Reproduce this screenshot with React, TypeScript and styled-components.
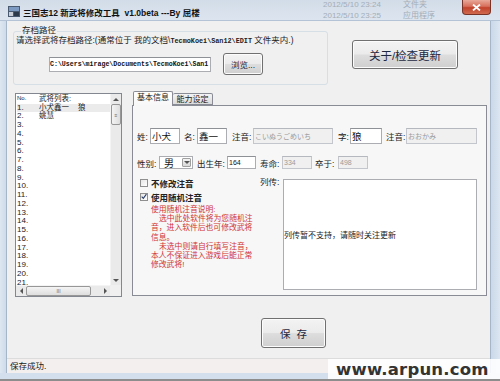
import React from 'react';
import styled, { createGlobalStyle } from 'styled-components';

const GlobalStyle = createGlobalStyle`
  html, body { margin: 0; padding: 0; }
  body {
    width: 500px;
    height: 381px;
    overflow: hidden;
    background: #8a8a8a;
    font-family: 'Liberation Sans', 'Noto Sans CJK SC', sans-serif;
    color: #1a1a1a;
  }
  * { box-sizing: border-box; }
`;

const Window = styled.div`
  position: relative;
  width: 500px;
  height: 381px;
  display: flex;
  flex-direction: column;
  background: #d3dfec;
  border-bottom: 2px solid #8d8d8d;
`;

const TitleBar = styled.div`
  height: 21px;
  display: flex;
  align-items: flex-start;
  background: linear-gradient(#d2dce8, #dce5ef);
  border-bottom: 1px solid #b4c3d5;
`;

const AppIcon = styled.svg`
  margin: 6px 0 0 8px;
  flex: none;
`;

const TitleText = styled.div`
  margin: 7px 0 0 3px;
  font-size: 8.5px;
  line-height: 12px;
  font-weight: bold;
  color: #111;
  white-space: pre;
`;

const Ghost = styled.div`
  margin-left: auto;
  width: 139px;
  display: grid;
  grid-template-columns: 80px 1fr;
  font-size: 8px;
  line-height: 11px;
  color: #a4adb7;
  margin-top: -1px;
`;

const CloseButton = styled.div`
  width: 29px;
  height: 15px;
  margin-right: 9px;
  border: 1px solid #7a3327;
  border-top: none;
  border-radius: 0 0 4px 4px;
  background: linear-gradient(#e9a899 0%, #d7705c 45%, #c2422b 55%, #cf6a4f 100%);
  display: flex;
  align-items: center;
  justify-content: center;
`;

const Middle = styled.div`
  flex: 1;
  display: flex;
`;

const LeftFrame = styled.div`
  width: 7px;
  background: linear-gradient(90deg, #dde7f2, #cfdbea);
  border-right: 1px solid #a6b6c9;
`;

const RightFrame = styled.div`
  width: 10px;
  background: linear-gradient(90deg, #cad8e8, #dce6f1);
  border-left: 1px solid #a6b6c9;
`;

const BottomFrame = styled.div`
  height: 6px;
  background: #d3dfec;
`;

const Client = styled.div`
  width: 483px;
  display: flex;
  flex-direction: column;
  background: #f0f0f0;
`;

const TopRow = styled.div`
  height: 69px;
  display: flex;
  align-items: flex-start;
`;

const GroupBox = styled.div`
  margin: 10px 0 0 6px;
  width: 315px;
  height: 54px;
  border: 1px solid #d5dfe5;
  border-radius: 3px;
  padding-left: 2px;
`;

const Legend = styled.div`
  width: fit-content;
  margin: -7px 0 0 5px;
  padding: 0 1px;
  background: #f0f0f0;
  font-size: 8.5px;
  line-height: 10px;
`;

const Hint = styled.div`
  font-size: 8.5px;
  line-height: 10px;
  white-space: nowrap;
  color: #222;
`;

const Mono = styled.span`
  font-family: 'Liberation Mono', monospace;
  font-size: 6.8px;
  font-weight: bold;
`;

const PathRow = styled.div`
  display: flex;
  align-items: center;
  margin: 7px 0 0 33px;
`;

const PathBox = styled.div`
  width: 162px;
  height: 15px;
  border: 1px solid #abadb3;
  border-top-color: #8e9196;
  background: #fff;
  overflow: hidden;
  white-space: nowrap;
  font-family: 'Liberation Mono', monospace;
  font-size: 6.6px;
  font-weight: bold;
  line-height: 13px;
  color: #111;
`;

const Button = styled.div<{ w: number; h: number; fs: number }>`
  width: ${(p) => p.w}px;
  height: ${(p) => p.h}px;
  border: 1px solid #707070;
  border-radius: 3px;
  background: linear-gradient(#f3f3f3 0%, #ebebeb 48%, #dddddd 52%, #cfcfcf 100%);
  box-shadow: inset 0 0 0 1px #fcfcfc;
  display: flex;
  align-items: center;
  justify-content: center;
  font-size: ${(p) => p.fs}px;
  color: #1d2740;
  white-space: pre;
  flex: none;
`;

const BrowseButton = styled(Button)`
  margin-left: 12px;
`;

const AboutButton = styled(Button)`
  margin: 19px 0 0 24px;
`;

const MainRow = styled.div`
  display: flex;
  align-items: flex-start;
`;

const ListBox = styled.div`
  margin: 3px 0 0 8px;
  width: 107px;
  height: 204px;
  border: 1px solid #828790;
  background: #fff;
  display: grid;
  grid-template-columns: 1fr 11px;
  grid-template-rows: 1fr 11px;
`;

const ListContent = styled.div`
  overflow: hidden;
  padding-left: 1px;
`;

const ListRow = styled.div<{ selected?: boolean; header?: boolean }>`
  display: flex;
  height: ${(p) => (p.header ? 9.5 : 8.75)}px;
  line-height: ${(p) => (p.header ? 9.5 : 8.75)}px;
  font-size: 7.5px;
  background: ${(p) => (p.selected ? '#ebebeb' : 'transparent')};
  white-space: nowrap;
`;

const NumCell = styled.div<{ header?: boolean }>`
  width: 22px;
  font-size: ${(p) => (p.header ? 6 : 8)}px;
`;

const NameCell = styled.div`
  font-size: 7.5px;
`;

const Surname = styled.span`
  margin-left: 9px;
`;

const VScroll = styled.div`
  display: flex;
  flex-direction: column;
  background: #eaeaea;
  border-left: 1px solid #f4f4f4;
`;

const HScroll = styled.div`
  display: flex;
  background: #eaeaea;
  border-top: 1px solid #f4f4f4;
`;

const Corner = styled.div`
  background: #f0f0f0;
`;

const Arrow = styled.div<{ size: number }>`
  flex: none;
  width: ${(p) => p.size}px;
  height: ${(p) => p.size}px;
  display: flex;
  align-items: center;
  justify-content: center;
`;

const Track = styled.div`
  flex: 1;
`;

const Thumb = styled.div<{ vertical?: boolean }>`
  flex: none;
  width: ${(p) => (p.vertical ? '10px' : '65px')};
  height: ${(p) => (p.vertical ? '21px' : '10px')};
  border: 1px solid #979797;
  border-radius: 2px;
  background: ${(p) =>
    p.vertical
      ? 'linear-gradient(90deg, #f4f4f4, #dedede)'
      : 'linear-gradient(#f4f4f4, #dedede)'};
  display: flex;
  align-items: center;
  justify-content: center;
  font-size: 5px;
  color: #666;
`;

const Tabs = styled.div`
  margin: 1px 0 0 10px;
  width: 355px;
  height: 205px;
  display: flex;
  flex-direction: column;
`;

const TabStrip = styled.div`
  height: 14px;
  display: flex;
  align-items: flex-end;
  padding-left: 1px;
  position: relative;
  z-index: 1;
`;

const Tab = styled.div<{ active?: boolean }>`
  width: 40px;
  height: ${(p) => (p.active ? 15 : 12)}px;
  margin-bottom: ${(p) => (p.active ? -1 : 0)}px;
  border: 1px solid #898c95;
  border-bottom: ${(p) => (p.active ? 'none' : '1px solid #898c95')};
  border-left: ${(p) => (p.active ? '1px solid #898c95' : 'none')};
  background: ${(p) =>
    p.active ? 'linear-gradient(#ffffff, #f7f7f7)' : 'linear-gradient(#f3f3f3, #dcdcdc)'};
  font-size: 8px;
  line-height: 11px;
  text-align: center;
  border-radius: 2px 2px 0 0;
`;

const TabPanel = styled.div`
  flex: 1;
  border: 1px solid #898c95;
  background: #f7f7f7;
  padding-left: 4px;
`;

const FieldRow = styled.div<{ h: number; mt: number }>`
  display: flex;
  align-items: center;
  height: ${(p) => p.h}px;
  margin-top: ${(p) => p.mt}px;
`;

const Label = styled.div<{ w: number; ml?: number }>`
  width: ${(p) => p.w}px;
  margin-left: ${(p) => p.ml ?? 0}px;
  font-size: 8.5px;
  color: #222;
  white-space: nowrap;
  flex: none;
`;

const Input = styled.div<{ w: number; disabled?: boolean; small?: boolean }>`
  width: ${(p) => p.w}px;
  height: 100%;
  border: 1px solid ${(p) => (p.disabled ? '#c3c6cc' : '#abadb3')};
  border-top-color: ${(p) => (p.disabled ? '#b5b8be' : '#8e9196')};
  background: ${(p) => (p.disabled ? '#f0f0f0' : '#fff')};
  color: ${(p) => (p.disabled ? '#9a9a9a' : '#111')};
  font-size: ${(p) => (p.small ? 7 : 9.5)}px;
  padding-left: 1px;
  display: flex;
  align-items: center;
  white-space: nowrap;
  overflow: hidden;
  flex: none;
`;

const Select = styled.div`
  width: 34px;
  height: 100%;
  border: 1px solid #abadb3;
  background: #fff;
  display: flex;
  align-items: center;
  justify-content: space-between;
  padding: 0 1px 0 4px;
  font-size: 10px;
  flex: none;
`;

const DropButton = styled.div`
  width: 9px;
  height: 9px;
  border: 1px solid #a0a0a0;
  border-radius: 1px;
  background: linear-gradient(#f4f4f4, #d8d8d8);
  display: flex;
  align-items: center;
  justify-content: center;
`;

const LowerGrid = styled.div`
  display: grid;
  grid-template-columns: 123px 23px 194px;
  margin-top: 9px;
`;

const CheckRow = styled.div<{ mt?: number }>`
  display: flex;
  align-items: center;
  height: 9px;
  margin-top: ${(p) => p.mt ?? 0}px;
  padding-left: 3px;
  gap: 3px;
  font-size: 8.5px;
  font-weight: bold;
  color: #222;
`;

const CheckBox = styled.div`
  width: 8px;
  height: 8px;
  border: 1px solid #8f8f8f;
  background: linear-gradient(135deg, #e6e6e6, #ffffff);
  display: flex;
  align-items: center;
  justify-content: center;
`;

const Note = styled.div`
  margin: 4px 0 0 14px;
  color: #d03434;
  font-size: 7.8px;
  line-height: 9.2px;
  white-space: nowrap;
`;

const NoteLine = styled.div<{ indent?: boolean }>`
  padding-left: ${(p) => (p.indent ? 8 : 0)}px;
`;

const MemoLabel = styled.div`
  font-size: 8.5px;
  line-height: 9px;
  color: #222;
`;

const Memo = styled.div`
  margin-top: 1px;
  height: 111px;
  border: 1px solid #abadb3;
  background: #fff;
  display: flex;
  align-items: center;
  font-size: 8px;
  white-space: nowrap;
`;

const SaveRow = styled.div`
  margin-top: 21px;
  padding-left: 254px;
`;

const StatusBar = styled.div`
  margin-top: auto;
  height: 15px;
  border-top: 1px solid #dcdcdc;
  background: #f2efee;
  padding-left: 3px;
  font-size: 8.5px;
  line-height: 14px;
`;

const Watermark = styled.div`
  position: absolute;
  right: 0;
  bottom: 0;
  width: 172px;
  height: 20px;
  background: rgba(255, 255, 255, 0.88);
  padding-left: 8px;
  font-family: 'DejaVu Sans', sans-serif;
  font-weight: bold;
  font-size: 16.5px;
  line-height: 21px;
  color: #333;
  letter-spacing: 0.2px;
`;

const triangle = (dir: 'up' | 'down' | 'left' | 'right') => {
  const pts = {
    up: '0,4 3,1 6,4',
    down: '0,1 3,4 6,1',
    left: '4,0 1,3 4,6',
    right: '1,0 4,3 1,6',
  }[dir];
  const vert = dir === 'up' || dir === 'down';
  return (
    <svg width={vert ? 6 : 5} height={vert ? 5 : 6} viewBox={vert ? '0 0 6 5' : '0 0 5 6'}>
      <polygon points={pts} fill="#555" />
    </svg>
  );
};

const names: Record<number, React.ReactNode> = {
  1: (
    <>
      小犬鑫一<Surname>狼</Surname>
    </>
  ),
  2: '姚慧',
};

function App() {
  const rows = Array.from({ length: 21 }, (_, i) => i + 1);
  return (
    <>
      <GlobalStyle />
      <Window>
        <TitleBar>
          <AppIcon width="12" height="11" viewBox="0 0 12 11">
            <rect x="0" y="0" width="12" height="11" fill="#4a5a70" />
            <rect x="1" y="1" width="10" height="4" fill="#7d9bc2" />
            <rect x="1" y="6" width="4" height="4" fill="#c9ced6" />
            <rect x="6" y="6" width="5" height="4" fill="#2d3a4c" />
          </AppIcon>
          <TitleText>三国志12 新武将修改工具  v1.0beta ---By 屈楼</TitleText>
          <Ghost>
            <span>2012/5/10 23:24</span>
            <span>文件夹</span>
            <span>2012/5/10 23:25</span>
            <span>应用程序</span>
          </Ghost>
          <CloseButton>
            <svg width="9" height="7" viewBox="0 0 9 7">
              <path d="M1 0.5 L8 6.5 M8 0.5 L1 6.5" stroke="#fff" strokeWidth="1.8" />
            </svg>
          </CloseButton>
        </TitleBar>
        <Middle>
          <LeftFrame />
          <Client>
            <TopRow>
              <GroupBox>
                <Legend>存档路径</Legend>
                <Hint>
                  请选择武将存档路径:(通常位于 我的文档\<Mono>TecmoKoei\San12\EDIT</Mono> 文件夹内.)
                </Hint>
                <PathRow>
                  <PathBox>C:\Users\mirage\Documents\TecmoKoei\San1</PathBox>
                  <BrowseButton w={40} h={22} fs={8.5}>
                    浏览...
                  </BrowseButton>
                </PathRow>
              </GroupBox>
              <AboutButton w={106} h={29} fs={11.5}>
                关于/检查更新
              </AboutButton>
            </TopRow>
            <MainRow>
              <ListBox>
                <ListContent>
                  <ListRow header>
                    <NumCell header>No.</NumCell>
                    <NameCell>武将列表:</NameCell>
                  </ListRow>
                  {rows.map((n) => (
                    <ListRow key={n} selected={n === 1}>
                      <NumCell>{n}.</NumCell>
                      <NameCell>{names[n]}</NameCell>
                    </ListRow>
                  ))}
                </ListContent>
                <VScroll>
                  <Arrow size={10}>{triangle('up')}</Arrow>
                  <Thumb vertical>≡</Thumb>
                  <Track />
                  <Arrow size={10}>{triangle('down')}</Arrow>
                </VScroll>
                <HScroll>
                  <Arrow size={10}>{triangle('left')}</Arrow>
                  <Thumb>III</Thumb>
                  <Track />
                  <Arrow size={10}>{triangle('right')}</Arrow>
                </HScroll>
                <Corner />
              </ListBox>
              <Tabs>
                <TabStrip>
                  <Tab active>基本信息</Tab>
                  <Tab>能力设定</Tab>
                </TabStrip>
                <TabPanel>
                  <FieldRow h={16} mt={22}>
                    <Label w={13}>姓:</Label>
                    <Input w={30}>小犬</Input>
                    <Label w={13} ml={4}>名:</Label>
                    <Input w={30}>鑫一</Input>
                    <Label w={21} ml={5}>注音:</Label>
                    <Input w={80} disabled small>
                      こいぬうごめいち
                    </Input>
                    <Label w={12} ml={5}>字:</Label>
                    <Input w={32}>狼</Input>
                    <Label w={20} ml={4}>注音:</Label>
                    <Input w={71} disabled small>
                      おおかみ
                    </Input>
                  </FieldRow>
                  <FieldRow h={13} mt={12}>
                    <Label w={22}>性别:</Label>
                    <Select>
                      男
                      <DropButton>{triangle('down')}</DropButton>
                    </Select>
                    <Label w={30} ml={4}>出生年:</Label>
                    <Input w={29} small>
                      164
                    </Input>
                    <Label w={22} ml={4}>寿命:</Label>
                    <Input w={30} disabled small>
                      334
                    </Input>
                    <Label w={23} ml={3}>卒于:</Label>
                    <Input w={30} disabled small>
                      498
                    </Input>
                  </FieldRow>
                  <LowerGrid>
                    <div>
                      <CheckRow>
                        <CheckBox />
                        不修改注音
                      </CheckRow>
                      <CheckRow mt={5}>
                        <CheckBox>
                          <svg width="7" height="7" viewBox="0 0 7 7">
                            <path d="M0.8 3.6 L2.7 5.6 L6.3 0.8" stroke="#2a3f6a" strokeWidth="1.3" fill="none" />
                          </svg>
                        </CheckBox>
                        使用随机注音
                      </CheckRow>
                      <Note>
                        <NoteLine>使用随机注音说明:</NoteLine>
                        <NoteLine indent>选中此处软件将为您随机注</NoteLine>
                        <NoteLine>音，进入软件后也可修改武将</NoteLine>
                        <NoteLine>信息。</NoteLine>
                        <NoteLine indent>未选中则请自行填写注音，</NoteLine>
                        <NoteLine>本人不保证进入游戏后能正常</NoteLine>
                        <NoteLine>修改武将!</NoteLine>
                      </Note>
                    </div>
                    <MemoLabel>列传:</MemoLabel>
                    <Memo>列传暂不支持，请随时关注更新</Memo>
                  </LowerGrid>
                </TabPanel>
              </Tabs>
            </MainRow>
            <SaveRow>
              <Button w={65} h={30} fs={10.5}>
                保  存
              </Button>
            </SaveRow>
            <StatusBar>保存成功.</StatusBar>
          </Client>
          <RightFrame />
        </Middle>
        <BottomFrame />
        <Watermark>www.arpun.com</Watermark>
      </Window>
    </>
  );
}

export default App;
